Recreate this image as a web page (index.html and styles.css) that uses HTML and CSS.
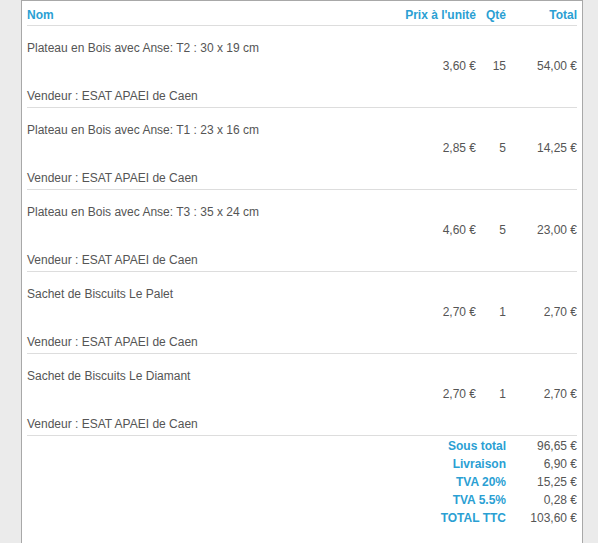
FILE: index.html
```html
<!DOCTYPE html>
<html lang="fr">
<head>
<meta charset="utf-8">
<title>Panier</title>
<link rel="stylesheet" href="styles.css">
</head>
<body>
<div class="panel">
  <div class="cart">
    <div class="row head">
      <div class="c-name">Nom</div>
      <div class="c-price">Prix à l'unité</div>
      <div class="c-qty">Qté</div>
      <div class="c-total">Total</div>
    </div>

    <div class="item">
      <div class="name">Plateau en Bois avec Anse: T2 : 30 x 19 cm</div>
      <div class="row">
        <div class="c-name"></div>
        <div class="c-price">3,60 €</div>
        <div class="c-qty">15</div>
        <div class="c-total">54,00 €</div>
      </div>
      <div class="vendor">Vendeur : ESAT APAEI de Caen</div>
    </div>

    <div class="item">
      <div class="name">Plateau en Bois avec Anse: T1 : 23 x 16 cm</div>
      <div class="row">
        <div class="c-name"></div>
        <div class="c-price">2,85 €</div>
        <div class="c-qty">5</div>
        <div class="c-total">14,25 €</div>
      </div>
      <div class="vendor">Vendeur : ESAT APAEI de Caen</div>
    </div>

    <div class="item">
      <div class="name">Plateau en Bois avec Anse: T3 : 35 x 24 cm</div>
      <div class="row">
        <div class="c-name"></div>
        <div class="c-price">4,60 €</div>
        <div class="c-qty">5</div>
        <div class="c-total">23,00 €</div>
      </div>
      <div class="vendor">Vendeur : ESAT APAEI de Caen</div>
    </div>

    <div class="item">
      <div class="name">Sachet de Biscuits Le Palet</div>
      <div class="row">
        <div class="c-name"></div>
        <div class="c-price">2,70 €</div>
        <div class="c-qty">1</div>
        <div class="c-total">2,70 €</div>
      </div>
      <div class="vendor">Vendeur : ESAT APAEI de Caen</div>
    </div>

    <div class="item">
      <div class="name">Sachet de Biscuits Le Diamant</div>
      <div class="row">
        <div class="c-name"></div>
        <div class="c-price">2,70 €</div>
        <div class="c-qty">1</div>
        <div class="c-total">2,70 €</div>
      </div>
      <div class="vendor">Vendeur : ESAT APAEI de Caen</div>
    </div>

    <div class="summary">
      <div class="row sum"><div class="label">Sous total</div><div class="c-total">96,65 €</div></div>
      <div class="row sum"><div class="label">Livraison</div><div class="c-total">6,90 €</div></div>
      <div class="row sum"><div class="label">TVA 20%</div><div class="c-total">15,25 €</div></div>
      <div class="row sum"><div class="label">TVA 5.5%</div><div class="c-total">0,28 €</div></div>
      <div class="row sum"><div class="label">TOTAL TTC</div><div class="c-total">103,60 €</div></div>
    </div>
  </div>
</div>
</body>
</html>
```

FILE: styles.css
```css
html, body {
  margin: 0;
  padding: 0;
  background: #ebebeb;
  height: 100%;
}

body {
  font-family: "Liberation Sans", Arial, sans-serif;
  font-size: 12px;
  line-height: 18px;
  color: #555555;
  overflow: hidden;
}

.panel {
  margin-left: 21px;
  width: 562px;
  min-height: 100%;
  box-sizing: border-box;
  background: #ffffff;
  border-left: 1px solid #a8a8a8;
  border-right: 1px solid #a8a8a8;
  border-top: 1px solid #a8a8a8;
  padding: 0 5px;
}

.cart {
  width: 550px;
}

.row {
  display: grid;
  grid-template-columns: 1fr 90px 30px 71px;
}

.c-price, .c-qty, .c-total {
  text-align: right;
  white-space: nowrap;
}

.head {
  padding: 5px 0 1px;
  border-bottom: 1px solid #dddddd;
  font-weight: bold;
  color: #2b9fd3;
}

.item {
  padding: 13px 0 2px;
  border-bottom: 1px solid #dddddd;
}

.vendor {
  margin-top: 12px;
}

.summary {
  padding-top: 1px;
}

.sum .label {
  grid-column: 1 / 4;
  text-align: right;
  font-weight: bold;
  color: #2b9fd3;
}

.sum .c-total {
  grid-column: 4;
}
```
